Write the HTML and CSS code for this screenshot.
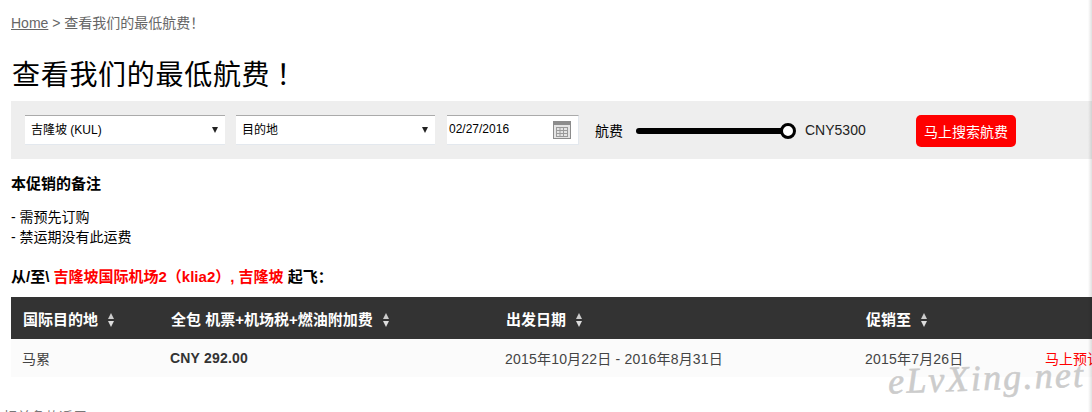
FILE: index.html
```html
<!DOCTYPE html>
<html lang="zh-CN">
<head>
  <meta charset="UTF-8">
  <meta name="viewport" content="width=device-width, initial-scale=1.0">
  <title>查看我们的最低航费！</title>
  <link rel="stylesheet" href="styles.css">
</head>
<body>

  <div class="page">
    <p class="breadcrumb"><a href="#">Home</a> &gt; 查看我们的最低航费！</p>

    <h1>查看我们的最低航费<span class="bang">！</span></h1>

    <form class="search-bar">
      <div class="select-box select-origin">吉隆坡 (KUL)</div>
      <div class="select-box select-dest">目的地</div>
      <div class="date-box">
        <span>02/27/2016</span>
        <svg class="cal-icon" width="18" height="18" viewBox="0 0 18 18">
          <rect x="0.5" y="0.5" width="17" height="17" fill="#e4e4e4" stroke="#8c8c8c"/>
          <rect x="1" y="1" width="16" height="3" fill="#8c8c8c"/>
          <path d="M3 6.500H15M3 9.500H15M3 12.500H15M3 15.500H15M3.500 6V16M7 6V16M10.500 6V16M14.500 6V16" stroke="#9a9a9a" fill="none"/>
        </svg>
      </div>
      <span class="fare-label">航费</span>
      <div class="slider"><span class="slider-knob"></span></div>
      <span class="fare-value">CNY5300</span>
      <button type="button" class="search-btn">马上搜索航费</button>
    </form>

    <p class="note-title">本促销的备注</p>
    <p class="note-list">- 需预先订购<br>- 禁运期没有此运费</p>

    <p class="from-line">从/至\ <span class="red">吉隆坡国际机场2（klia2）, 吉隆坡</span> 起飞：</p>

    <table class="fares">
      <colgroup>
        <col class="col-dest">
        <col class="col-price">
        <col class="col-date">
        <col class="col-until">
        <col class="col-book">
      </colgroup>
      <thead>
        <tr>
          <th>国际目的地<span class="sort"></span></th>
          <th>全包 机票+机场税+燃油附加费<span class="sort"></span></th>
          <th>出发日期<span class="sort"></span></th>
          <th>促销至<span class="sort"></span></th>
          <th></th>
        </tr>
      </thead>
      <tbody>
        <tr>
          <td>马累</td>
          <td class="price">CNY 292.00</td>
          <td class="date-cell">2015年10月22日 - 2016年8月31日</td>
          <td class="date-cell">2015年7月26日</td>
          <td><a class="book" href="#">马上预订</a></td>
        </tr>
      </tbody>
    </table>
  </div>

  <p class="terms">相关条款适用</p>

  <div class="watermark">eLvXing.net</div>
  <div class="edge-shadow"></div>

</body>
</html>
```

FILE: styles.css
```css
html, body {
  height: 412px;
  overflow: hidden;
}

body {
  font-family: 'Liberation Sans', 'Noto Sans CJK SC', sans-serif;
  font-size: 14px;
  margin: 0;
  color: #000;
  background: #fff;
  position: relative;
}

.page {
  width: 1300px;
  padding: 14px 0 0 11px;
}

.breadcrumb {
  margin: 0;
  line-height: 18px;
  color: #666;
}

.breadcrumb a {
  color: #666;
}

h1 {
  font-family: 'Liberation Serif', 'Noto Sans CJK TC', serif;
  font-size: 28px;
  font-weight: normal;
  letter-spacing: 0.7px;
  line-height: 36px;
  margin: 26px 0 7px 1px;
}

.bang {
  margin-left: 6px;
}

.search-bar {
  display: flex;
  align-items: center;
  height: 58px;
  padding-left: 14px;
  background: #eee;
}

.select-box {
  position: relative;
  box-sizing: border-box;
  width: 200px;
  height: 30px;
  margin-right: 11px;
  padding-left: 6px;
  line-height: 29px;
  font-size: 12px;
  background: #fff;
  border-top: 1px solid #aaa;
  border-bottom: 1px solid #e3e8ee;
}

.select-box::after {
  content: "";
  position: absolute;
  right: 7px;
  top: 11px;
  border-style: solid;
  border-width: 6px 3px 0;
  border-color: #222 transparent transparent;
}

.select-dest {
  width: 199px;
  margin-right: 12px;
}

.date-box {
  display: flex;
  align-items: center;
  justify-content: space-between;
  box-sizing: border-box;
  width: 132px;
  height: 30px;
  padding: 0 7px 0 2px;
  font-size: 12px;
  background: #fff;
  border-top: 1px solid #aaa;
  border-right: 1px solid #e3e8ee;
  border-bottom: 1px solid #e3e8ee;
}

.date-box span {
  margin-top: -2px;
}

.fare-label {
  margin-left: 16px;
}

.slider {
  position: relative;
  width: 152px;
  height: 6px;
  margin: 2px 0 0 13px;
  background: #000;
  border-radius: 3px;
}

.slider-knob {
  position: absolute;
  right: -8px;
  top: -5px;
  box-sizing: border-box;
  width: 16px;
  height: 16px;
  background: #fff;
  border: 3px solid #000;
  border-radius: 50%;
}

.fare-value {
  width: 111px;
  margin-left: 17px;
  color: #222;
}

.search-btn {
  width: 100px;
  height: 32px;
  margin-top: 2px;
  padding: 0;
  font-family: inherit;
  font-size: 14px;
  color: #fff;
  background: #f00;
  border: none;
  border-radius: 5px;
}

.note-title {
  font-size: 15px;
  font-weight: bold;
  line-height: 20px;
  margin: 15px 0 13px;
}

.note-list {
  line-height: 20px;
  margin: 0 0 20px;
}

.from-line {
  font-size: 15px;
  font-weight: bold;
  line-height: 20px;
  margin: 0 0 10px;
}

.red {
  color: #f00;
}

.fares {
  table-layout: fixed;
  width: 1189px;
  border-collapse: collapse;
}

.col-dest { width: 148px; }
.col-price { width: 335px; }
.col-date { width: 360px; }
.col-until { width: 180px; }
.col-book { width: 166px; }

.fares th {
  height: 42px;
  padding: 0 0 0 12px;
  font-size: 15px;
  text-align: left;
  color: #fff;
  background: #333;
}

.fares td {
  height: 38px;
  padding: 0 0 0 11px;
  color: #444;
  background: #fbfbfb;
}

.fares .price {
  font-weight: bold;
  letter-spacing: 0.2px;
  color: #333;
}

.fares .date-cell {
  letter-spacing: 0.2px;
}

.book {
  color: #f00;
  text-decoration: none;
}

.sort {
  display: inline-block;
  position: relative;
  width: 7px;
  height: 14px;
  margin-left: 10px;
  vertical-align: -2px;
}

.sort::before,
.sort::after {
  content: "";
  position: absolute;
  left: 0;
  border-style: solid;
  border-color: transparent;
}

.sort::before {
  top: 0;
  border-width: 0 3.5px 6px;
  border-bottom-color: #ccc;
}

.sort::after {
  bottom: 0;
  border-width: 6px 3.5px 0;
  border-top-color: #ddd;
}

.terms {
  margin: 0;
  padding: 31px 0 0 3px;
  line-height: 18px;
  color: #777;
}

.watermark {
  position: absolute;
  left: 888px;
  top: 358px;
  font-family: 'Liberation Serif', serif;
  font-size: 36px;
  font-style: italic;
  letter-spacing: 2.200px;
  line-height: 40px;
  color: #ccc;
  -webkit-text-stroke: 0.6px #ccc;
  transform: rotate(-2deg);
  white-space: nowrap;
}

.edge-shadow {
  position: absolute;
  right: 0;
  top: 0;
  width: 4px;
  height: 412px;
  background: linear-gradient(to right, rgba(0,0,0,0), rgba(0,0,0,0.12));
}
```
